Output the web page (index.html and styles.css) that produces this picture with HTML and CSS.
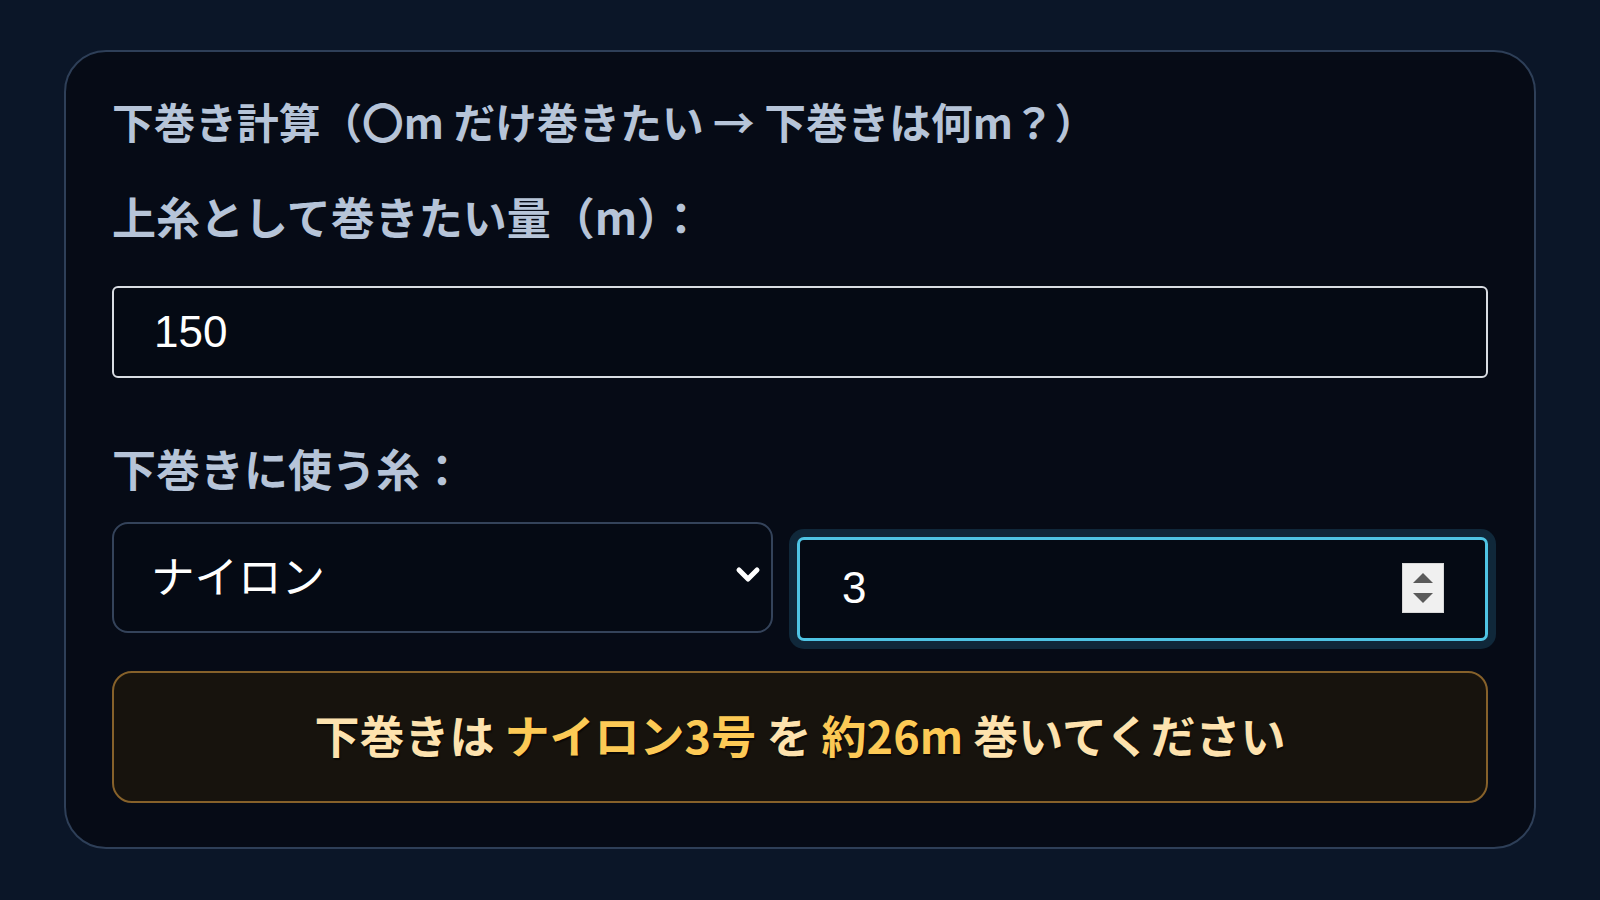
FILE: index.html
```html
<!DOCTYPE html>
<html lang="ja">
<head>
<meta charset="utf-8">
<title>下巻き計算</title>
<link rel="stylesheet" href="styles.css">
</head>
<body>
<div class="page">
  <section class="card">
    <h2 class="title">下巻き計算（〇m だけ巻きたい → 下巻きは何m？）</h2>
    <label class="label first" for="target">上糸として巻きたい量（m）：</label>
    <input class="text-input" id="target" type="text" value="150">
    <label class="label second">下巻きに使う糸：</label>
    <div class="row">
      <div class="select-field">
        <select class="select">
          <option>ナイロン</option>
          <option>フロロ</option>
          <option>PE</option>
        </select>
        <svg class="chevron" width="26" height="18" viewBox="0 0 26 18" aria-hidden="true">
          <polyline points="4,4 13,13 22,4" fill="none" stroke="#ffffff" stroke-width="5" stroke-linecap="round" stroke-linejoin="round"/>
        </svg>
      </div>
      <div class="num-field">
        <input class="num-input" type="text" value="3">
        <div class="spinner">
          <span class="tri up"></span>
          <span class="tri down"></span>
        </div>
      </div>
    </div>
    <div class="result">
      <p class="result-text">下巻きは <strong>ナイロン3号</strong> を <strong>約26m</strong> 巻いてください</p>
    </div>
  </section>
</div>
</body>
</html>
```

FILE: styles.css
```css
* {
  box-sizing: border-box;
}

html, body {
  margin: 0;
  padding: 0;
  background: #0b1628;
}

body {
  width: 1600px;
  height: 900px;
  overflow: hidden;
  font-family: "Noto Sans CJK JP", "Noto Sans", sans-serif;
}

.page {
  padding: 50px 64px;
}

.card {
  display: flex;
  flex-direction: column;
  background: #060b16;
  border: 2px solid #2e3f58;
  border-radius: 42px;
  padding: 45px 46px 44px;
}

.title {
  margin: 0;
  font-size: 41.7px;
  line-height: 49px;
  font-weight: 700;
  color: #b6c4d8;
  white-space: nowrap;
}

.label {
  display: block;
  font-size: 44px;
  line-height: 53px;
  font-weight: 700;
  color: #b6c4d8;
}

.label.first {
  margin-top: 44px;
}

.label.second {
  margin-top: 64px;
}

.text-input {
  display: block;
  width: 100%;
  height: 92px;
  margin-top: 43px;
  padding: 0 40px;
  background: #050a14;
  border: 2px solid #d9dde3;
  border-radius: 6px;
  color: #ffffff;
  font-family: "Liberation Sans", Arial, sans-serif;
  font-size: 44px;
  outline: none;
}

.row {
  display: grid;
  grid-template-columns: 661px minmax(0, 1fr);
  column-gap: 24px;
  align-items: start;
  margin-top: 27px;
}

.select-field {
  display: flex;
  align-items: center;
  height: 111px;
  background: #050a14;
  border: 2px solid #34435a;
  border-radius: 16px;
  padding: 0 10px 6px 37px;
}

.select {
  flex: 1;
  width: 0;
  min-width: 0;
  appearance: none;
  -webkit-appearance: none;
  background: transparent;
  border: none;
  outline: none;
  color: #ffffff;
  font-family: "Noto Sans CJK JP", sans-serif;
  font-size: 43.5px;
  font-weight: 400;
  padding: 0;
}

.select option {
  background: #050a14;
  color: #ffffff;
}

.chevron {
  flex: none;
}

.num-field {
  display: flex;
  align-items: center;
  height: 104px;
  margin-top: 15px;
  background: #050a14;
  border: 3px solid #4fc4e4;
  border-radius: 7px;
  box-shadow: 0 0 0 8px #10283a;
  padding: 0 41px 2px 42px;
}

.num-input {
  flex: 1;
  width: 0;
  min-width: 0;
  background: transparent;
  border: none;
  outline: none;
  color: #ffffff;
  font-family: "Liberation Sans", Arial, sans-serif;
  font-size: 44px;
  padding: 0;
}

.spinner {
  flex: none;
  width: 42px;
  height: 50px;
  background: #f0f0f0;
  border: 1px solid #d8d8d8;
  display: flex;
  flex-direction: column;
  align-items: center;
  justify-content: center;
  gap: 10px;
}

.tri {
  display: block;
  width: 0;
  height: 0;
  border-left: 10px solid transparent;
  border-right: 10px solid transparent;
}

.tri.up {
  border-bottom: 10px solid #5a5a5a;
}

.tri.down {
  border-top: 10px solid #5a5a5a;
}

.result {
  display: flex;
  align-items: center;
  justify-content: center;
  height: 132px;
  margin-top: 30px;
  background: #17130d;
  border: 2px solid #86612a;
  border-radius: 20px;
  padding-bottom: 6px;
}

.result-text {
  margin: 0;
  font-size: 45px;
  line-height: 53px;
  font-weight: 700;
  color: #fde2ae;
  white-space: nowrap;
  text-shadow: 1px 2px 1px rgba(0, 0, 0, 0.55);
}

.result-text strong {
  font-weight: 700;
  color: #fcc955;
}
```
